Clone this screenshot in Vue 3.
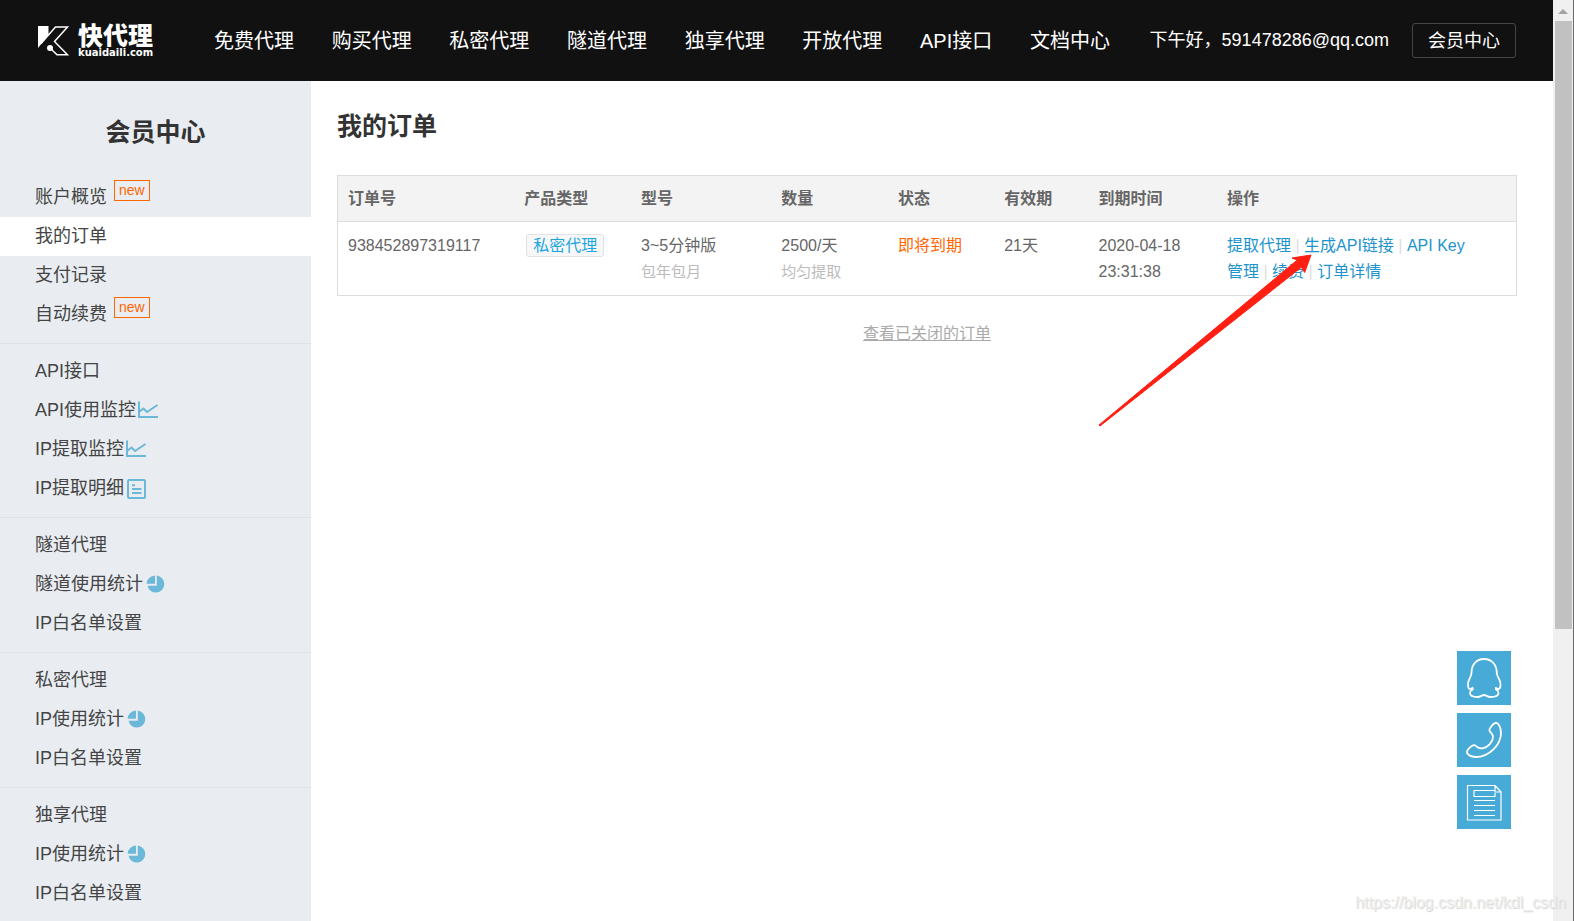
<script setup>
const navItems = ['免费代理', '购买代理', '私密代理', '隧道代理', '独享代理', '开放代理', 'API接口', '文档中心']

const menuGroups = [
  [
    { text: '账户概览', tag: 'new' },
    { text: '我的订单', active: true },
    { text: '支付记录' },
    { text: '自动续费', tag: 'new' },
  ],
  [
    { text: 'API接口' },
    { text: 'API使用监控', icon: 'line' },
    { text: 'IP提取监控', icon: 'line' },
    { text: 'IP提取明细', icon: 'list' },
  ],
  [
    { text: '隧道代理' },
    { text: '隧道使用统计', icon: 'pie' },
    { text: 'IP白名单设置' },
  ],
  [
    { text: '私密代理' },
    { text: 'IP使用统计', icon: 'pie' },
    { text: 'IP白名单设置' },
  ],
  [
    { text: '独享代理' },
    { text: 'IP使用统计', icon: 'pie' },
    { text: 'IP白名单设置' },
  ],
]

const columns = ['订单号', '产品类型', '型号', '数量', '状态', '有效期', '到期时间', '操作']
const actions = ['提取代理', '生成API链接', 'API Key管理', '续费', '订单详情']
</script>

<template>
  <div class="window">
    <div class="page">
      <header class="topbar">
        <a href="#" class="logo" aria-label="快代理">
          <svg class="logo-mark" viewBox="0 0 32 32" aria-hidden="true">
            <path d="M0 1h10.500v9L0 23z" fill="#fff" />
            <path d="M3 18.500L17.500 2H29.500L16.500 16.500L29.500 29.800H19L12 23" fill="none" stroke="#fff" stroke-width="1.500" />
            <circle cx="12" cy="23" r="3" fill="#fff" />
          </svg>
          <span class="logo-words">
            <span class="logo-name">快代理</span>
            <span class="logo-domain">kuaidaili.com</span>
          </span>
        </a>
        <nav class="nav">
          <a v-for="item in navItems" :key="item" href="#">{{ item }}</a>
        </nav>
        <div class="user">
          <span class="greeting">下午好，591478286@qq.com</span>
          <a href="#" class="member">会员中心</a>
        </div>
      </header>

      <div class="body">
        <aside class="sidebar">
          <h2>会员中心</h2>
          <ul v-for="(group, g) in menuGroups" :key="g" class="group">
            <li v-for="item in group" :key="item.text">
              <a href="#" class="item" :class="{ active: item.active }">
                <span>{{ item.text }}</span>
                <span v-if="item.tag" class="tag">{{ item.tag }}</span>
                <svg v-if="item.icon === 'line'" class="icon" viewBox="0 0 22 20" aria-hidden="true">
                  <path d="M2 .5V16H21" />
                  <path d="M2 11L6.500 7.500L10 11L20.500 4" />
                </svg>
                <svg v-else-if="item.icon === 'list'" class="icon" viewBox="0 0 22 20" aria-hidden="true">
                  <rect x="3" y="1" width="17" height="18" rx="1" />
                  <path d="M7 6.200H10M7 10H16.500M7 14H16.500" />
                </svg>
                <svg v-else-if="item.icon === 'pie'" class="icon pie" viewBox="0 0 22 20" aria-hidden="true">
                  <path d="M12.800 .6A8.500 8.500 0 1 1 3.500 10.800H12.800Z" />
                  <path d="M11 .6V8.800H2.600A8.600 8.600 0 0 1 11 .6Z" />
                </svg>
              </a>
            </li>
          </ul>
        </aside>

        <main class="main">
          <h1>我的订单</h1>
          <table class="orders">
            <thead>
              <tr>
                <th v-for="col in columns" :key="col" scope="col">{{ col }}</th>
              </tr>
            </thead>
            <tbody>
              <tr>
                <td>938452897319117</td>
                <td><span class="product">私密代理</span></td>
                <td>3~5分钟版<br /><span class="note">包年包月</span></td>
                <td>2500/天<br /><span class="note">均匀提取</span></td>
                <td class="expiring">即将到期</td>
                <td>21天</td>
                <td>2020-04-18 23:31:38</td>
                <td class="actions">
                  <template v-for="(action, i) in actions" :key="action">
                    <span v-if="i" class="bar"> | </span><a href="#">{{ action }}</a>
                  </template>
                </td>
              </tr>
            </tbody>
          </table>
          <a href="#" class="closed">查看已关闭的订单</a>
        </main>
      </div>
    </div>

    <div class="scrollbar" aria-hidden="true">
      <span class="arrow-up"></span>
      <span class="thumb"></span>
    </div>

    <svg class="pointer" viewBox="0 0 216 174" aria-hidden="true">
      <path d="M1 172L199.300 7L194 5L213 2L206.700 19.500L203.300 14.300L2 173Z" fill="#ff2013" stroke="#ff2013" stroke-width="1" />
    </svg>

    <div class="float">
      <button type="button" aria-label="QQ">
        <svg viewBox="0 0 54 54">
          <path d="M27 8C19 8 14.500 14 14.500 22C14.500 26 11 28.500 11 33C11 36 11.500 38 13 38C14 38 14.500 37.500 15.500 36.800C16 38 16 38.500 15 39C13.500 39.500 13 40.500 13 42C13 45 17 46 20.500 46C23.500 46 25 44 27 44C29 44 30.500 46 33.500 46C37 46 41.500 45 41.500 42C41.500 40.500 41 39.500 39.500 39C38.500 38.500 38.500 38 38.800 36.800C40 37.500 40.500 38 41.500 38C43 38 43.500 36 43.500 33C43.500 28.500 39.800 26 39.800 22C39.800 14 35 8 27 8Z" />
        </svg>
      </button>
      <button type="button" aria-label="电话">
        <svg viewBox="0 0 54 54">
          <path d="M32.500 17.500C32 15.500 36 10.500 38.500 10C41.500 9.500 44 15 44 20C44 31 33 44 18.500 44C14 44 9.500 41.500 10 38.500C10.500 36 15 32 17.500 32.200C19.500 32.500 20 36 25.500 35.300C31 34.500 36 28.500 36 24C36 20.500 33 19.500 32.500 17.500Z" />
        </svg>
      </button>
      <button type="button" aria-label="文档">
        <svg viewBox="0 0 54 54" class="thin">
          <path d="M10.500 10.500H38L44 17V45H10.500ZM38 10.500V17H44M38 15.500H17V21.500H38V18M17 25.500H38M17 30.500H38M17 35.500H38M17 40.500H38" />
        </svg>
      </button>
    </div>

    <div class="watermark">https://blog.csdn.net/kdl_csdn</div>
  </div>
</template>

<style>
body {
  margin: 0;
  background: #fff;
}
</style>

<style scoped>
.window {
  position: relative;
  display: flex;
  box-sizing: border-box;
  min-height: 100vh;
  overflow: hidden;
  border-right: 1px solid #6b6b6b;
  border-bottom: 1px solid #333;
  font-family: "Liberation Sans", "Noto Sans CJK SC", sans-serif;
  font-size: 16px;
  color: #666;
}
a {
  color: inherit;
  text-decoration: none;
}
.page {
  flex: 1;
  min-width: 0;
  display: flex;
  flex-direction: column;
}
.topbar {
  display: flex;
  align-items: center;
  height: 81px;
  padding: 0 37px 0 38px;
  background: #111;
  color: #fff;
  white-space: nowrap;
}
.logo {
  display: flex;
  align-items: center;
  gap: 8px;
  width: 176px;
  flex-shrink: 0;
}
.logo-mark {
  width: 32px;
  height: 32px;
}
.logo-words {
  display: flex;
  flex-direction: column;
}
.logo-name {
  font-size: 25px;
  line-height: 24px;
  font-weight: 900;
}
.logo-domain {
  font-family: "DejaVu Sans", sans-serif;
  font-size: 10px;
  line-height: 10px;
  font-weight: bold;
}
.nav {
  display: flex;
  justify-content: space-between;
  flex: 0 1 896px;
  padding-bottom: 2px;
  font-size: 20px;
}
.user {
  display: flex;
  align-items: center;
  gap: 23px;
  margin-left: auto;
  font-size: 18px;
  line-height: 35px;
}
.member {
  box-sizing: border-box;
  padding: 0 15px;
  height: 35px;
  border: 1px solid #444;
  border-radius: 3px;
}
.body {
  flex: 1;
  display: flex;
}
.sidebar {
  width: 311px;
  flex-shrink: 0;
  background: #e9edf2;
  color: #444;
}
.sidebar h2 {
  margin: 0;
  padding: 33px 0 28px;
  font-size: 25px;
  line-height: 36px;
  text-align: center;
  color: #333;
}
.group {
  list-style: none;
  margin: 0;
  padding: 0 0 9px;
}
.group + .group {
  padding-top: 8px;
  border-top: 1px solid #dde1e6;
}
.item {
  display: flex;
  align-items: center;
  height: 39px;
  padding-left: 35px;
  font-size: 18px;
  line-height: 39px;
}
.item.active {
  background: #fff;
}
.tag {
  align-self: flex-start;
  margin: 2px 0 0 7px;
  padding: 0 4px;
  border: 1px solid #f60;
  color: #f60;
  font-size: 14px;
  line-height: 19px;
}
.icon {
  width: 22px;
  height: 20px;
  margin-left: 1px;
  fill: none;
  stroke: #6cb8d9;
  stroke-width: 2;
}
.icon.pie {
  fill: #6cb8d9;
  stroke: none;
}
.main {
  flex: 1;
  min-width: 0;
  display: flex;
  flex-direction: column;
  padding: 27px 36px 0 26px;
}
.main h1 {
  margin: 0 0 31px;
  font-size: 25px;
  line-height: 36px;
  color: #333;
}
.orders {
  width: 100%;
  table-layout: fixed;
  border-collapse: collapse;
  border: 1px solid #ddd;
  line-height: 26px;
}
.orders th,
.orders td {
  box-sizing: border-box;
  padding: 11px 10px 10px;
  text-align: left;
  vertical-align: top;
}
.orders th {
  padding: 10px 10px 9px;
  background: #f3f3f3;
}
.orders tbody tr {
  border-top: 1px solid #ddd;
}
.orders th:nth-child(1) { width: 15%; }
.orders th:nth-child(2) { width: 9.9%; }
.orders th:nth-child(3) { width: 11.9%; }
.orders th:nth-child(4) { width: 9.9%; }
.orders th:nth-child(5) { width: 9%; }
.orders th:nth-child(6) { width: 8%; }
.orders th:nth-child(7) { width: 10.9%; }
.product {
  display: inline-block;
  margin-left: 2px;
  padding: 0 6px;
  border: 1px solid #e1e1e8;
  border-radius: 3px;
  background: #f7f7f9;
  color: #1ba6e0;
  line-height: 21px;
}
.note {
  font-size: 15px;
  color: #bbb;
}
.orders .expiring {
  color: #f60;
}
.actions a {
  color: #1e93cd;
}
.orders .actions {
  padding-right: 40px;
}
.bar {
  color: #ddd;
}
.closed {
  align-self: center;
  margin-top: 25px;
  line-height: 26px;
  color: #aaa;
  text-decoration: underline;
}
.scrollbar {
  display: flex;
  flex-direction: column;
  align-items: center;
  width: 20px;
  flex-shrink: 0;
  background: #f0f0f0;
}
.arrow-up {
  margin: 9px 0 7px;
  border: 5px solid transparent;
  border-top: 0;
  border-bottom-color: #a3a3a3;
}
.thumb {
  width: 17px;
  height: 66vh;
  background: #c1c1c1;
}
.pointer {
  position: absolute;
  top: 253px;
  right: 259px;
  width: 216px;
  height: 174px;
  pointer-events: none;
}
.float {
  position: fixed;
  right: 63px;
  bottom: 92px;
  display: flex;
  flex-direction: column;
  gap: 8px;
}
.float button {
  width: 54px;
  height: 54px;
  padding: 0;
  border: 0;
  background: #48aad6;
}
.float svg {
  display: block;
  fill: none;
  stroke: #fff;
  stroke-width: 1.8;
  stroke-linejoin: round;
}
.float .thin {
  stroke-width: 1.2;
}
.watermark {
  position: absolute;
  right: 7px;
  bottom: 9px;
  font-size: 16px;
  line-height: 20px;
  color: #eee;
  text-shadow: 1px 1px 1px #d4d4d4;
}
</style>
